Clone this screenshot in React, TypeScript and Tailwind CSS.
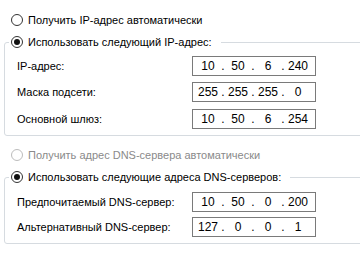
import React from 'react';

const Radio = ({ checked = false, disabled = false }: { checked?: boolean; disabled?: boolean }) => (
  <span
    className={`flex h-[12px] w-[12px] items-center justify-center rounded-full border bg-white ${
      disabled ? 'border-[#bcbcbc]' : 'border-[#333333]'
    }`}
  >
    {checked && <span className="h-[6px] w-[6px] rounded-full bg-[#111111]" />}
  </span>
);

const RadioRow = ({ label, checked, disabled }: { label: string; checked?: boolean; disabled?: boolean }) => (
  <div className="flex h-[16px] items-center gap-[5px]">
    <Radio checked={checked} disabled={disabled} />
    <span className={disabled ? 'text-[#8a8a8a]' : 'text-black'}>{label}</span>
  </div>
);

const IpBox = ({ parts }: { parts: string[] }) => (
  <div className="flex h-[20px] w-[124px] items-center border border-[#7a7a7a] bg-white pl-[4px] text-[12px]">
    {parts.map((p, i) => (
      <React.Fragment key={i}>
        <span className="w-[22px] text-center">{p}</span>
        {i < 3 && <span className="w-[8px] text-center">.</span>}
      </React.Fragment>
    ))}
  </div>
);

const Row = ({ label, parts, className = '' }: { label: string; parts: string[]; className?: string }) => (
  <div className={`flex items-center ${className}`}>
    <span className="w-[175px]">{label}</span>
    <IpBox parts={parts} />
  </div>
);

export default function App() {
  return (
    <div className="h-[258px] w-[360px] overflow-hidden bg-white text-[11px] leading-[16px] text-black [font-family:'Liberation_Sans',Arial,sans-serif]">
      <div className="pl-[11px] pt-[12px]">
        <RadioRow label="Получить IP-адрес автоматически" />
      </div>

      <fieldset className="ml-[4px] mt-[6px] w-[380px] rounded-[3px] border border-[#d6dbe0] pb-[6px] pl-[12px]">
        <legend className="-ml-[8px] pl-[2px] pr-[9px]">
          <RadioRow label="Использовать следующий IP-адрес:" checked />
        </legend>
        <Row className="mt-[6px]" label="IP-адрес:" parts={['10', '50', '6', '240']} />
        <Row className="mt-[6px]" label="Маска подсети:" parts={['255', '255', '255', '0']} />
        <Row className="mt-[7px]" label="Основной шлюз:" parts={['10', '50', '6', '254']} />
      </fieldset>

      <div className="mt-[11px] pl-[11px]">
        <RadioRow label="Получить адрес DNS-сервера автоматически" disabled />
      </div>

      <fieldset className="ml-[4px] mt-[6px] w-[380px] rounded-[3px] border border-[#d6dbe0] pb-[6px] pl-[12px]">
        <legend className="-ml-[8px] pl-[2px] pr-[9px]">
          <RadioRow label="Использовать следующие адреса DNS-серверов:" checked />
        </legend>
        <Row className="mt-[7px]" label="Предпочитаемый DNS-сервер:" parts={['10', '50', '0', '200']} />
        <Row className="mt-[5px]" label="Альтернативный DNS-сервер:" parts={['127', '0', '0', '1']} />
      </fieldset>
    </div>
  );
}
